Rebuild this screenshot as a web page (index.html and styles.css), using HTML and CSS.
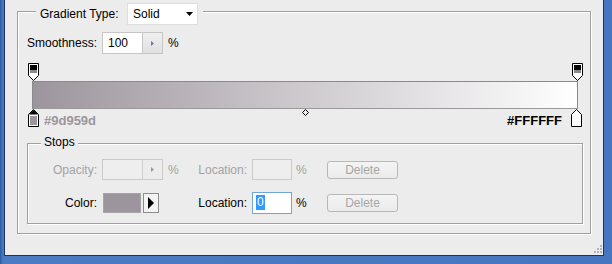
FILE: index.html
```html
<!DOCTYPE html>
<html>
<head>
<meta charset="utf-8">
<link rel="stylesheet" href="styles.css">
</head>
<body>
<div class="frame">
  <div class="dialog">
    <div class="group outer">
      <div class="legend legend-type">
        <span class="lbl-type">Gradient Type:</span>
        <div class="select">
          <span>Solid</span>
          <svg class="caret" width="7" height="4" viewBox="0 0 7 4"><path d="M0 0H7L3.5 4Z" fill="#000"/></svg>
        </div>
      </div>

      <div class="smooth">
        <span class="lbl-smooth">Smoothness:</span>
        <div class="spin">
          <span class="spin-text">100</span>
          <span class="spin-btn"><svg width="3" height="5" viewBox="0 0 3 5"><path d="M0 0L3 2.5L0 5Z" fill="#6b7896"/></svg></span>
        </div>
        <span class="pct">%</span>
      </div>

      <div class="editor">
        <div class="stops-top">
          <span class="stop" style="left:0%">
            <svg width="11" height="18" viewBox="0 0 11 18"><path d="M0.5 0.5H10.5V12.5L5.5 17.5L0.5 12.5Z" fill="#fff" stroke="#000"/><rect x="2" y="2" width="7" height="5" fill="#000"/><rect x="2" y="7" width="7" height="3" fill="#8a8a8a"/></svg>
          </span>
          <span class="stop" style="left:100%">
            <svg width="11" height="18" viewBox="0 0 11 18"><path d="M0.5 0.5H10.5V12.5L5.5 17.5L0.5 12.5Z" fill="#fff" stroke="#000"/><rect x="2" y="2" width="7" height="5" fill="#000"/><rect x="2" y="7" width="7" height="3" fill="#8a8a8a"/></svg>
          </span>
        </div>
        <div class="bar"></div>
        <div class="stops-bottom">
          <div class="track">
            <span class="stop" style="left:0%">
              <svg width="11" height="18" viewBox="0 0 11 18"><path d="M5.5 0.5L10.5 5.5V17.5H0.5V5.5Z" fill="#fff" stroke="#000"/><path d="M5.5 1L10 5.5H1Z" fill="#000"/><rect x="2" y="7" width="7" height="9" fill="#9d959d"/></svg>
            </span>
            <span class="mid" style="left:50%">
              <svg width="7" height="7" viewBox="0 0 7 7"><path d="M3.5 0.5L6.5 3.5L3.5 6.5L0.5 3.5Z" fill="none" stroke="#000"/></svg>
            </span>
            <span class="stop" style="left:100%">
              <svg width="11" height="18" viewBox="0 0 11 18"><path d="M5.5 0.5L10.5 5.5V17.5H0.5V5.5Z" fill="#fff" stroke="#000"/></svg>
            </span>
          </div>
          <span class="hex hex-left">#9d959d</span>
          <span class="hex hex-right">#FFFFFF</span>
        </div>
      </div>

      <div class="group stops">
        <div class="legend legend-stops">Stops</div>
        <div class="grid">
          <span class="c-lbl dis">Opacity:</span>
          <div class="spin spin-dis">
            <span class="spin-text"></span>
            <span class="spin-btn"><svg width="3" height="5" viewBox="0 0 3 5"><path d="M0 0L3 2.5L0 5Z" fill="#9a9a9a"/></svg></span>
          </div>
          <span class="c-pct dis">%</span>
          <span class="c-lbl dis">Location:</span>
          <div class="field field-dis"></div>
          <span class="c-pct2 dis">%</span>
          <button class="btn">Delete</button>

          <span class="c-lbl">Color:</span>
          <div class="color">
            <span class="swatch"></span>
            <span class="arrow-btn"><svg width="6" height="12" viewBox="0 0 6 12"><path d="M0 0L6 6L0 12Z" fill="#000"/></svg></span>
          </div>
          <span class="c-pct"></span>
          <span class="c-lbl">Location:</span>
          <div class="field field-focus"><span class="sel">0</span></div>
          <span class="c-pct2">%</span>
          <button class="btn">Delete</button>
        </div>
      </div>
    </div>
    <svg class="grip" width="8" height="8" viewBox="0 0 8 8">
      <rect x="6" y="0" width="2" height="2" fill="#b4b4b4"/>
      <rect x="6" y="3" width="2" height="2" fill="#b4b4b4"/>
      <rect x="3" y="3" width="2" height="2" fill="#b4b4b4"/>
      <rect x="6" y="6" width="2" height="2" fill="#b4b4b4"/>
      <rect x="3" y="6" width="2" height="2" fill="#b4b4b4"/>
      <rect x="0" y="6" width="2" height="2" fill="#b4b4b4"/>
    </svg>
  </div>
</div>
</body>
</html>
```

FILE: styles.css
```css
html, body {
  margin: 0;
  padding: 0;
}
body {
  width: 612px;
  height: 264px;
  overflow: hidden;
  font-family: "Liberation Sans", Arial, sans-serif;
  font-size: 12px;
  color: #000;
}
.frame {
  width: 612px;
  height: 264px;
  box-sizing: border-box;
  padding: 0 8px 8px 4px;
  background: linear-gradient(to right, #2d5ba2 0, #4a7bc3 3px, #4576bf 100%);
}
.dialog {
  position: relative;
  height: 256px;
  box-sizing: border-box;
  background: #ececec;
  border: 1px solid #1b3563;
  border-top: none;
  padding-top: 11px;
}
.group {
  border: 1px solid #a0a0a0;
  box-shadow: inset 1px 1px 0 #fff, 1px 1px 0 #fff;
}
.outer {
  margin-left: 12px;
  width: 574px;
  box-sizing: border-box;
}
.legend {
  display: flex;
  align-items: center;
  width: max-content;
  background: #ececec;
}
.legend-type {
  margin: -9px 0 0 18px;
  padding: 0 5px 0 4px;
  height: 22px;
}
.lbl-type {
  width: 87px;
}
.select {
  width: 71px;
  height: 22px;
  box-sizing: border-box;
  border: 1px solid #dedede;
  background: #fff;
  display: flex;
  align-items: center;
  justify-content: space-between;
  padding: 0 4px 0 5px;
}
.smooth {
  display: flex;
  align-items: center;
  height: 22px;
  margin: 7px 0 0 9px;
}
.lbl-smooth {
  width: 75px;
}
.spin {
  width: 61px;
  height: 22px;
  box-sizing: border-box;
  display: flex;
  border: 1px solid #c6c6c6;
  background: #fff;
}
.spin-text {
  flex: 1;
  padding-left: 5px;
  display: flex;
  align-items: center;
}
.spin-btn {
  width: 19px;
  border-left: 1px solid #c6c6c6;
  background: linear-gradient(#f0f0f0, #e0e0e0);
  display: flex;
  align-items: center;
  justify-content: center;
}
.pct {
  margin-left: 5px;
}
.editor {
  margin: 9px 0 0 14px;
  width: 546px;
}
.stops-top {
  position: relative;
  height: 18px;
  margin: 0 1px;
}
.stop {
  position: absolute;
  top: 0;
  width: 11px;
  height: 18px;
  transform: translateX(-5px);
}
.stop svg, .mid svg {
  display: block;
}
.bar {
  height: 28px;
  box-sizing: border-box;
  border: 1px solid #8a8a8a;
  border-bottom-color: #9a9a9a;
  background: linear-gradient(to right, #9d959d, #ffffff);
}
.stops-bottom {
  position: relative;
  height: 19px;
  display: flex;
  justify-content: space-between;
  align-items: flex-end;
  padding: 0 16px 0 12px;
}
.track {
  position: absolute;
  top: 0;
  left: 1px;
  right: 2px;
  height: 18px;
}
.mid {
  position: absolute;
  top: 0;
  width: 7px;
  height: 7px;
  transform: translateX(-3px);
}
.hex {
  font-weight: bold;
  font-size: 13px;
  line-height: 15px;
}
.hex-left {
  color: #9d959d;
}
.hex-right {
  color: #000;
}
.stops {
  margin: 15px 7px 9px 9px;
  padding-bottom: 10px;
}
.legend-stops {
  margin: -9px 0 0 13px;
  padding: 0 3px;
  height: 15px;
  line-height: 15px;
}
.grid {
  display: grid;
  grid-template-columns: 74px 61px 34px 55px 40px 35px 71px;
  grid-auto-rows: 21px;
  row-gap: 12px;
  align-items: center;
  margin-top: 9px;
}
.c-lbl {
  text-align: right;
  padding-right: 5px;
}
.c-pct {
  padding-left: 5px;
}
.c-pct2 {
  padding-left: 4px;
}
.dis {
  color: #a3a3a3;
}
.spin-dis {
  height: 21px;
  background: #eeeeee;
  border-color: #cacaca;
}
.spin-dis .spin-btn {
  background: #ececec;
  border-left-color: #d0d0d0;
}
.field {
  height: 21px;
  box-sizing: border-box;
  display: flex;
  align-items: center;
  padding-left: 3px;
}
.field-dis {
  border: 1px solid #cacaca;
  background: #eeeeee;
}
.field-focus {
  height: 22px;
  border: 1px solid #6fa6dc;
  background: #fff;
}
.sel {
  background: #3399ff;
  color: #fff;
  line-height: 15px;
  padding: 0 1px;
}
.color {
  display: flex;
  gap: 2px;
  height: 20px;
  padding-left: 1px;
}
.swatch {
  width: 38px;
  height: 20px;
  box-sizing: border-box;
  background: #9d959d;
  border: 1px solid #a6a6a6;
}
.arrow-btn {
  width: 16px;
  height: 20px;
  box-sizing: border-box;
  border: 1px solid #8c8c8c;
  background: #f3f3f3;
  display: flex;
  align-items: center;
  justify-content: center;
}
.btn {
  width: 71px;
  height: 18px;
  box-sizing: border-box;
  border: 1px solid #b8b8b8;
  border-radius: 3px;
  background: linear-gradient(#f4f4f4, #ebebeb);
  color: #a6a6a6;
  font-family: "Liberation Sans", Arial, sans-serif;
  font-size: 12px;
  padding: 0;
  line-height: 16px;
}
.grip {
  position: absolute;
  right: 1px;
  bottom: 2px;
}
```
